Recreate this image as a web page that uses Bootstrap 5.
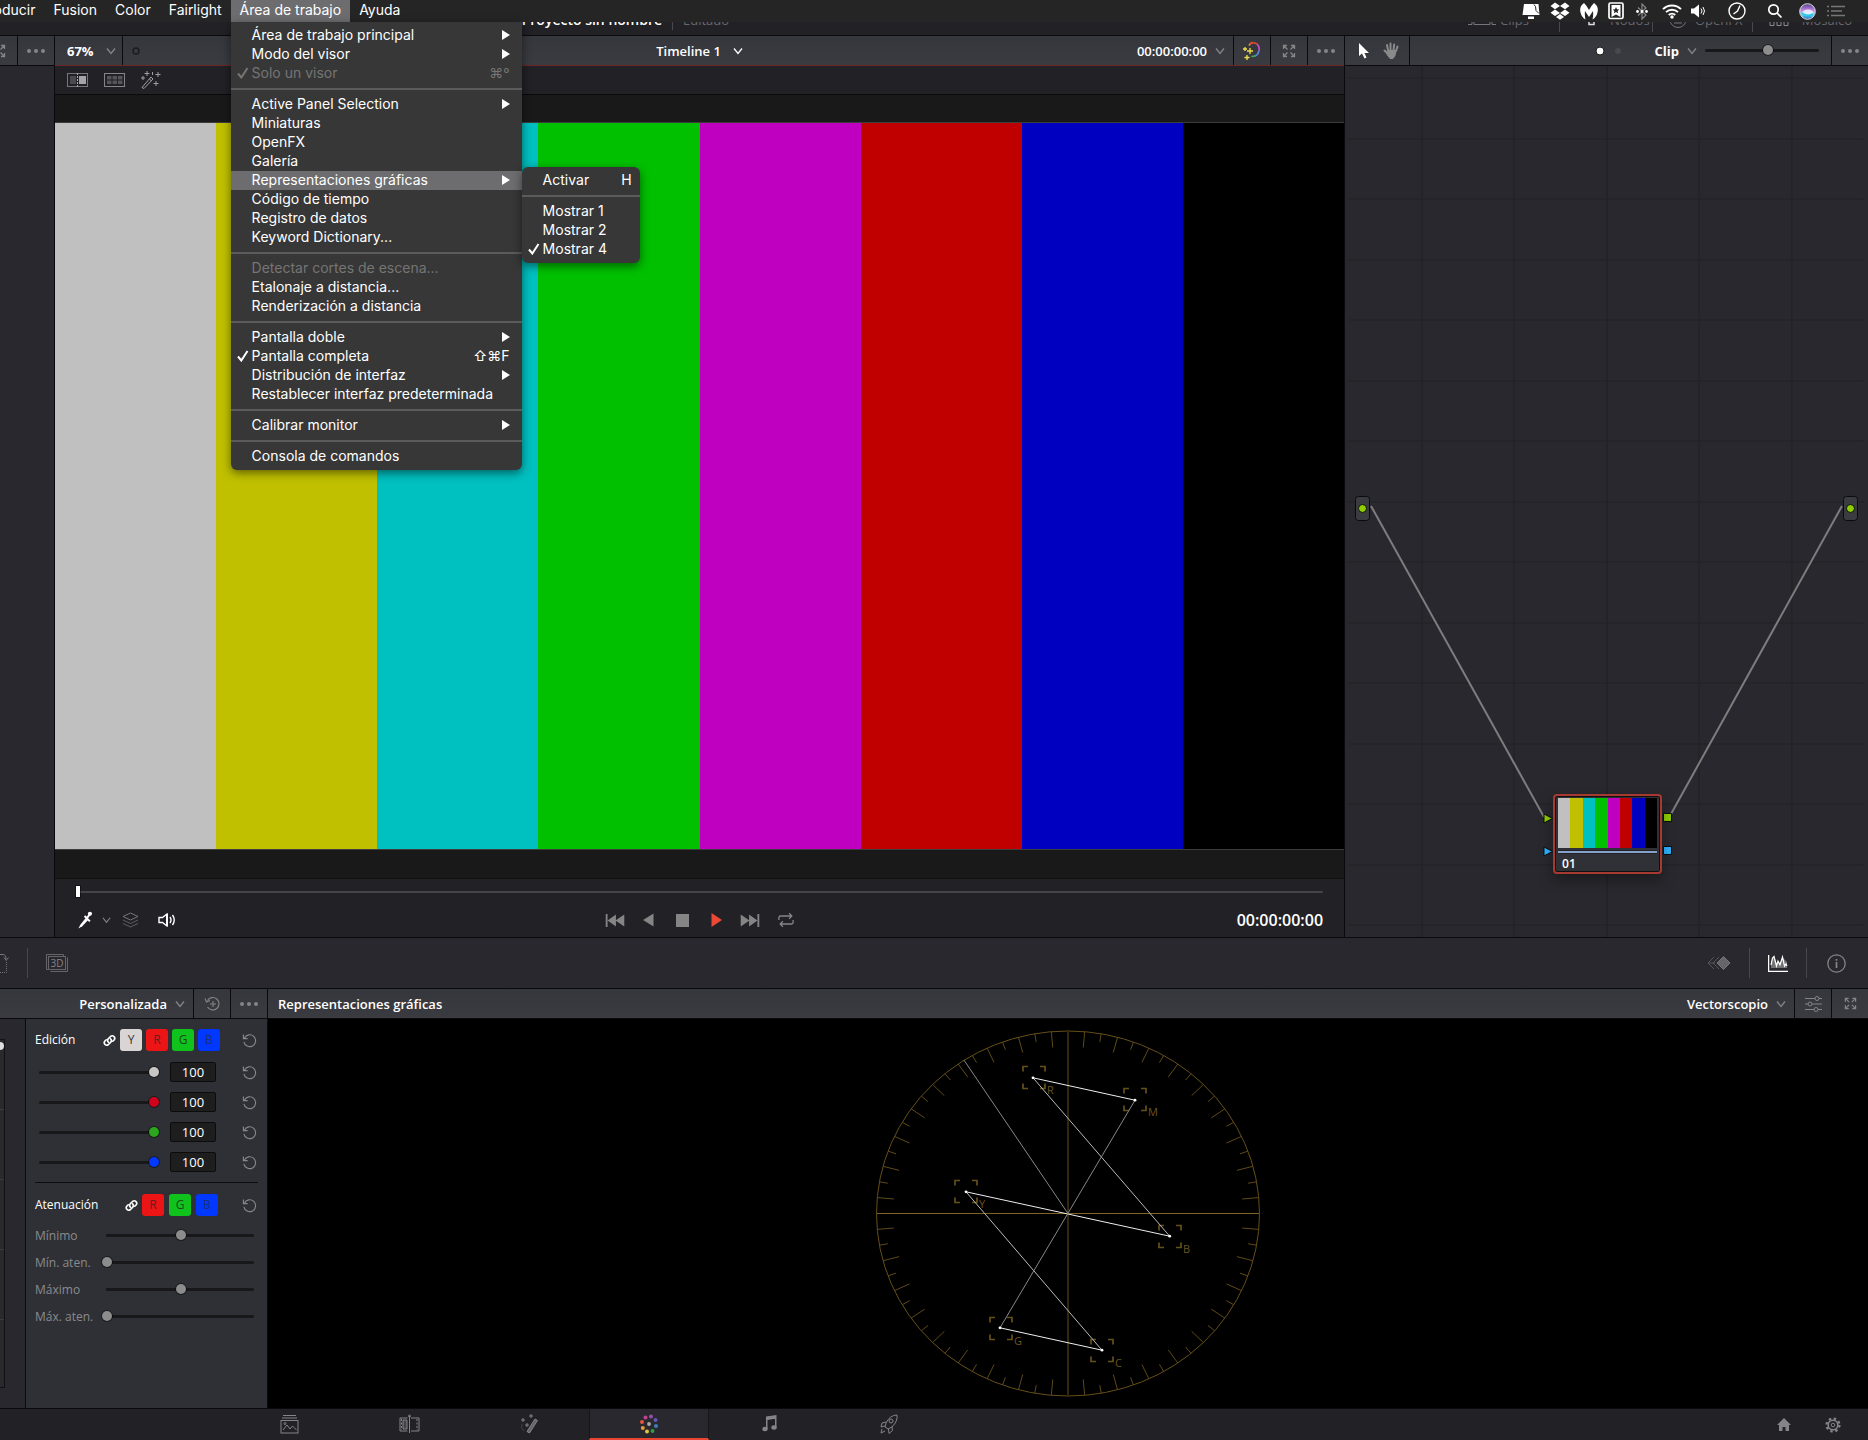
<!DOCTYPE html>
<html lang="es">
<head>
<meta charset="utf-8">
<meta name="viewport" content="width=device-width, initial-scale=1">
<title>Proyecto sin nombre</title>
<link href="https://cdn.jsdelivr.net/npm/bootstrap@5.3.0/dist/css/bootstrap.min.css" rel="stylesheet">
<style>
:root{--edge:#0a0a0c;--head:#393a40;--panel:#29282e;--bar:#212126;--dim:#858588}
body{font-family:"Open Sans","Noto Sans",sans-serif;font-size:13px;line-height:18px;color:#fff;background:var(--bar);overflow-x:hidden}
svg{display:block;flex:none}
button{background:none;border:0;padding:0;color:inherit;font-weight:inherit}
.dim-icon{color:var(--dim)}
.mac{font-family:Inter,"Liberation Sans",sans-serif;font-size:14px;line-height:19px}
.mac-bar{height:22px;background:#252525}
.mac-items{margin-left:-46px}
.mac-top{padding:0 9px;line-height:20px;height:22px;padding-bottom:2px}
.mac-open{background:#6d6d6f}
.status-icons{display:grid;grid-template-columns:32px 26px 32px 22px 30px 30px 22px 56px 20px 44px 14px;justify-items:center;margin-right:25px;height:22px}
.mac-menu{position:absolute;z-index:20;background:#373737;padding:4px 0;border-radius:0 0 6px 6px;box-shadow:0 3px 10px rgba(0,0,0,.5);top:22px;left:0;width:291px}
.mac-sub{top:-4px;left:291px;width:118px;border-radius:6px}
.mac-row{display:flex;align-items:center;width:100%;height:19px;padding:0 12px 2px 21px;position:relative;text-align:left;white-space:nowrap}
.mac-sub .mac-row{padding-right:8px}
.mac-row.hot{background:#6d6d6f}
.mac-row.off{color:#757575}
.tick{position:absolute;left:6px;top:3px}
.mac-sep{height:2px;background:#5b5b5b;margin:5px 0}
.app-strip{height:13px;overflow:hidden}
.app-strip>div{margin-top:-18px}
.app-title{font-size:14px;font-weight:600;margin-left:513px;width:149px;text-align:right;white-space:nowrap}
.strip-sep{width:1px;height:20px;background:#4a4a4e;margin:0 10px}
.app-strip .dimtext{color:#68686c}
.strip-item{display:flex;align-items:center;height:24px;border-right:1px solid #4a4a4e}
.strip-item:last-child{border:0}
.head-row{background:linear-gradient(#36373c,#3a3b41);border-top:1px solid var(--edge);border-bottom:1px solid var(--edge);font-weight:600;height:31px}
.head-row.live{border-bottom-color:#6f2526}
.side{flex:1 1 0}
.cell{display:flex;align-items:center;justify-content:center;align-self:stretch;border-left:1px solid var(--edge);color:var(--dim);width:37px;flex:none}
.cell.slim{width:27px;margin-left:6px}
.gap-a{gap:12px}
.upper{flex:1 1 auto;min-height:700px}
.side-strip{width:55px;border-right:1px solid var(--edge);background:var(--panel)}
.side-fill{border-bottom:1px solid var(--edge)}
.viewer-tools{height:29px;border-bottom:1px solid var(--edge);gap:16px;padding-left:12px;color:#858588}
.stage{background:#191919;padding:27px 0 28px;border-bottom:1px solid #111}
.colour-bars{display:flex;border-top:1px solid #3c3c3c;border-bottom:1px solid #3c3c3c}
.colour-bars i{flex:1}
.colour-bars i:nth-child(1){background:#c0c0c0}.colour-bars i:nth-child(2){background:#c0c000}
.colour-bars i:nth-child(3){background:#00c0c0}.colour-bars i:nth-child(4){background:#00c000}
.colour-bars i:nth-child(5){background:#c000c0}.colour-bars i:nth-child(6){background:#c00000}
.colour-bars i:nth-child(7){background:#0000c0}.colour-bars i:nth-child(8){background:#000}
.transport{height:59px;border-bottom:1px solid var(--edge);padding:6px 21px 0 21px}
.transport .row-b{display:grid;grid-template-columns:1fr auto 1fr;align-items:center;height:42px}
.transport .play-keys{color:#858585;gap:18px}
.big-time{font-size:16px;font-weight:600}
.seek{height:14px;margin:0}
input[type=range]{appearance:none;-webkit-appearance:none;background:transparent;display:block;margin:0;height:14px}
input[type=range]::-webkit-slider-runnable-track{height:3px;background:#18181a;border-radius:2px}
input[type=range]::-webkit-slider-thumb{-webkit-appearance:none;width:10px;height:10px;border-radius:50%;background:var(--thumb,#8c8c8c);margin-top:-4px;box-shadow:0 0 0 1px rgba(0,0,0,.45)}
.seek::-webkit-slider-runnable-track{background:#44454b!important;height:2px!important}
.seek::-webkit-slider-thumb{width:4px!important;height:11px!important;border-radius:0!important;background:#fff!important;margin-top:-5px!important}
.node-panel{width:28.05%;flex:none;border-left:1px solid var(--edge)}
.pointer-tools{width:65px;border-right:1px solid var(--edge);padding-left:14px;gap:14px}
.zoom-range{width:114px}
.node-canvas{position:relative;background:var(--panel);border-bottom:1px solid var(--edge)}
.node-card{position:absolute;left:208px;top:728px;width:109px;height:80px;background:#303136;border:2px solid #a63a31;border-radius:4px;padding:2px 3px;box-shadow:inset 0 0 0 1px #111,0 6px 14px rgba(0,0,0,.35);font-size:12px;font-weight:600;line-height:17px}
.node-card .colour-bars{height:50px;border:0}
.node-card hr{margin:2px 0 1px;border:0;height:4px;background:#86a2cc;opacity:1;border-bottom:1px solid #222;border-top:1px solid #222}
.node-lines{position:absolute;left:0;top:0;width:100%;height:100%}
.mid-bar{height:50px;background:var(--panel);color:#77777b}
.mid-sep{width:1px;height:30px;background:#48484c;margin:0 18px}
.lower{height:389px}
.curve-head{width:267px}
.scope-head{border-left:1px solid var(--edge);padding-left:10px}
.curve-edge{width:26px;border-right:1px solid var(--edge);background:var(--panel);padding-top:20px}
.curve-box{width:5px;height:349px;border:1px solid #121214;border-left:0;position:relative;background:repeating-linear-gradient(#29292d 0 69px,#3a3a3f 69px 70px)}
.curve-box b{position:absolute;left:-4px;top:2px;width:8px;height:8px;border-radius:50%;background:#ddd}
.curve-tools{width:242px;border-right:1px solid var(--edge);background:#2f3035;padding:10px 9px 0}
.line-a{display:flex;align-items:center;height:22px;font-size:12px;font-weight:500}
.group-a{padding-top:6px}
.chip{width:22px;height:22px;border-radius:3px;font-size:12px;line-height:22px;text-align:center;color:#333;flex:none}
.chip.y{background:#d9d5d5}.chip.r{background:#ec1414;color:#63201f}.chip.g{background:#10c21c;color:#174d1b}.chip.b{background:#0038ff;color:#1f2d7c}
.chips{gap:4px;margin-right:22px}
.chips.three{gap:5px;margin-right:24px}
.chan{height:30px;display:flex;align-items:center}
.chan input[type=range]{width:120px;margin-left:4px}
.num{width:46px;height:20px;margin-left:11px;background:#1e1e1f;border:1px solid #0c0c0d;border-radius:2px;color:#fff;font-size:13px;text-align:center;padding:0}
.soft{height:27px;display:flex;align-items:center;color:#8a8a8d;font-size:12px}
.soft label{width:67px}
.soft input{width:152px}
.soft input::-webkit-slider-runnable-track{background:linear-gradient(90deg,transparent 4px,#18181a 4px)}
.rule{height:1px;background:#0d0d0f;margin:5px 0 11px}
.reset{margin-left:auto;margin-right:1px;color:#88888b}
.line-a .reset{margin-left:0}
.scope{background:#000}
.page-bar{height:32px;border-top:1px solid var(--edge);padding-left:229px;color:#77777b}
.page-tab{width:120px;display:flex;align-items:center;justify-content:center;color:inherit;border-bottom:2px solid transparent}
.page-tab.on{background:var(--panel);border-bottom-color:#ec4433;border-left:1px solid #17171a;border-right:1px solid #17171a}
.page-end{gap:34px;margin-right:27px}
</style>
<script src="https://cdn.jsdelivr.net/npm/bootstrap@5.3.0/dist/js/bootstrap.bundle.min.js"></script>
</head>
<body class="d-flex flex-column min-vh-100">
<svg width="0" height="0" class="position-absolute" aria-hidden="true"><defs>
<symbol id="chev" viewBox="0 0 10 10"><path d="M1 2.500L5 7.500L9 2.500" fill="none" stroke="currentColor" stroke-width="1.300"/></symbol>
<symbol id="dots" viewBox="0 0 20 6"><g fill="currentColor"><circle cx="3" cy="3" r="2"/><circle cx="10" cy="3" r="2"/><circle cx="17" cy="3" r="2"/></g></symbol>
<symbol id="expand" viewBox="0 0 14 14"><path d="M1.500 5V1.500H5M9 1.500h3.500V5M12.500 9v3.500H9M5 12.500H1.500V9M1.500 1.500l4 4M12.500 1.500l-4 4M12.500 12.500l-4-4M1.500 12.500l4-4" fill="none" stroke="currentColor" stroke-width="1.300"/></symbol>
<symbol id="reset" viewBox="0 0 16 16"><path d="M2.500 5.500A6.300 6.300 0 1 1 2 9.500M1.500 1.500V6H6" fill="none" stroke="currentColor" stroke-width="1.200"/></symbol>
<symbol id="chain" viewBox="0 0 12 12"><g fill="none" stroke="#fff" stroke-width="1.500" stroke-linecap="round"><path d="M5 7.500a2.300 2.300 0 0 1 0-3.200l2.200-2.200a2.300 2.300 0 0 1 3.200 3.200L9 6.700"/><path d="M7 4.500a2.300 2.300 0 0 1 0 3.200L4.800 9.900A2.300 2.300 0 0 1 1.600 6.700L3 5.300"/></g></symbol>
<symbol id="arrow" viewBox="0 0 8 10"><path d="M0 0L8 5L0 10z" fill="#fff"/></symbol>
<symbol id="check" viewBox="0 0 12 12"><path d="M1 6.500L4.300 10.500L10.500 1" fill="none" stroke="currentColor" stroke-width="2"/></symbol>
<symbol id="skip" viewBox="0 0 20 14"><path d="M0 0h2v14H0zM2 7L11 .5v13zM10.500 7L20 .5v13z" fill="currentColor"/></symbol>
</defs></svg>

<nav class="mac mac-bar d-flex justify-content-between position-relative" aria-label="Menú">
  <div class="mac-items d-flex">
    <button class="mac-top">Reproducir</button><button class="mac-top">Fusion</button><button class="mac-top">Color</button><button class="mac-top">Fairlight</button>
    <div class="position-relative">
      <button class="mac-top mac-open">Área de trabajo</button>
      <div class="mac-menu">
        <button class="mac-row">Área de trabajo principal<svg class="ms-auto" width="8" height="10"><use href="#arrow"/></svg></button>
        <button class="mac-row">Modo del visor<svg class="ms-auto" width="8" height="10"><use href="#arrow"/></svg></button>
        <button class="mac-row off"><svg class="tick" width="12" height="12"><use href="#check"/></svg>Solo un visor<span class="ms-auto">⌘º</span></button>
        <div class="mac-sep"></div>
        <button class="mac-row">Active Panel Selection<svg class="ms-auto" width="8" height="10"><use href="#arrow"/></svg></button>
        <button class="mac-row">Miniaturas</button>
        <button class="mac-row">OpenFX</button>
        <button class="mac-row">Galería</button>
        <div class="position-relative">
          <button class="mac-row hot">Representaciones gráficas<svg class="ms-auto" width="8" height="10"><use href="#arrow"/></svg></button>
          <div class="mac-menu mac-sub">
            <button class="mac-row">Activar<span class="ms-auto">H</span></button>
            <div class="mac-sep"></div>
            <button class="mac-row">Mostrar 1</button>
            <button class="mac-row">Mostrar 2</button>
            <button class="mac-row"><svg class="tick" width="12" height="12"><use href="#check"/></svg>Mostrar 4</button>
          </div>
        </div>
        <button class="mac-row">Código de tiempo</button>
        <button class="mac-row">Registro de datos</button>
        <button class="mac-row">Keyword Dictionary...</button>
        <div class="mac-sep"></div>
        <button class="mac-row off">Detectar cortes de escena...</button>
        <button class="mac-row">Etalonaje a distancia...</button>
        <button class="mac-row">Renderización a distancia</button>
        <div class="mac-sep"></div>
        <button class="mac-row">Pantalla doble<svg class="ms-auto" width="8" height="10"><use href="#arrow"/></svg></button>
        <button class="mac-row"><svg class="tick" width="12" height="12"><use href="#check"/></svg>Pantalla completa<span class="ms-auto">⇧⌘F</span></button>
        <button class="mac-row">Distribución de interfaz<svg class="ms-auto" width="8" height="10"><use href="#arrow"/></svg></button>
        <button class="mac-row">Restablecer interfaz predeterminada</button>
        <div class="mac-sep"></div>
        <button class="mac-row">Calibrar monitor<svg class="ms-auto" width="8" height="10"><use href="#arrow"/></svg></button>
        <div class="mac-sep"></div>
        <button class="mac-row">Consola de comandos</button>
      </div>
    </div>
    <button class="mac-top">Ayuda</button>
  </div>
  <div class="status-icons align-items-center">
    <svg width="18" height="16" viewBox="0 0 18 16"><path d="M2 1h14.500l1 11H.5zM6 13.500h6V16H6z" fill="#fff"/><path d="M12 1.500l1.500 2 .5 4 3 3" fill="none" stroke="#252525"/></svg>
    <svg width="20" height="18" viewBox="0 0 20 18" fill="#fff"><path d="M5 .5L10 4 5 7.200.5 4zM15 .5L19.500 4 15 7.200 10 4zM5 7.500L10 11l-5 3L.5 10.800zM15 7.500l4.500 3.300L15 14l-5-3zM10 12l4 3-4 2.800L6 15z"/></svg>
    <svg width="18" height="17" viewBox="0 0 18 17"><path d="M4 0q3 3 5 7 2-4 5-7 5 3.500 3.500 9.500-1 4.500-5 7 1-4 .5-8.500L9 14 5 8q-.5 4.500.5 8.500-4-2.500-5-7Q-1 3.500 4 0" fill="#fff"/></svg>
    <svg width="16" height="18" viewBox="0 0 16 18"><rect x="1" y="1" width="14" height="15.500" rx="1.500" fill="none" stroke="#fff" stroke-width="1.700"/><path d="M3.500 3h9v12L8 12.500 3.500 15z" fill="#fff"/><path d="M8 5l1 2.200 2.300.2-1.700 1.500.5 2.300L8 10l-2.100 1.200.5-2.300-1.700-1.500L7 7.200z" fill="#252525"/></svg>
    <svg width="12" height="17" viewBox="0 0 12 17"><path d="M2 4.500l8 7.500-4 4V1l4 4-8 7.500" fill="none" stroke="#888" stroke-width="1.200"/><g fill="#fff"><circle cx="1.500" cy="8.500" r="1.400"/><circle cx="6" cy="8.500" r="1.400"/><circle cx="10.500" cy="8.500" r="1.400"/></g></svg>
    <svg width="20" height="15" viewBox="0 0 20 15"><g fill="none" stroke="#fff" stroke-width="1.900"><path d="M1 5.200a12.700 12.700 0 0 1 18 0M4 8.200a8.500 8.500 0 0 1 12 0M6.800 11a4.500 4.500 0 0 1 6.400 0"/></g><circle cx="10" cy="13" r="1.700" fill="#fff"/></svg>
    <svg width="14" height="14" viewBox="0 0 14 14"><path d="M0 4.500h3L8 .5v13l-5-4H0z" fill="#fff"/><path d="M10 4.500q2 2.500 0 5M12 3q3 4 0 8" fill="none" stroke="#fff"/></svg>
    <svg width="18" height="18" viewBox="0 0 18 18" fill="none" stroke="#fff" stroke-width="1.400"><circle cx="9" cy="9" r="8"/><path d="M12 3.500L9.500 9 5.500 12"/></svg>
    <svg width="16" height="16" viewBox="0 0 16 16" fill="none" stroke="#fff" stroke-width="1.700"><circle cx="6.500" cy="6.500" r="4.700"/><path d="M10 10l4.500 4.500"/></svg>
    <svg width="17" height="17" viewBox="0 0 17 17"><defs><linearGradient id="siri" x2="0" y2="1"><stop stop-color="#4b3f86"/><stop offset=".45" stop-color="#c98be8"/><stop offset=".7" stop-color="#56e0ee"/><stop offset="1" stop-color="#2a5fc0"/></linearGradient></defs><circle cx="8.500" cy="8.500" r="7.800" fill="url(#siri)" stroke="#ddd"/><ellipse cx="9" cy="9.500" rx="5.500" ry="3" fill="#fff" opacity=".75"/><path d="M3 10q5 4 11 1" stroke="#21c5e8" fill="none" stroke-width="1.500"/></svg>
    <svg width="18" height="12" viewBox="0 0 18 12" fill="none" stroke="#777" stroke-width="1.600"><path d="M0 1.500h2M4 1.500h14M0 6h2M4 6h11M0 10.500h2M4 10.500h14"/></svg>
  </div>
</nav>

<div class="app-strip d-flex justify-content-between">
  <div class="d-flex align-items-center"><span class="app-title">Proyecto sin nombre</span><span class="strip-sep"></span><span class="dimtext">Editado</span></div>
  <div class="d-flex align-items-center">
    <div class="strip-item" style="width:92px"><svg width="28" height="14" viewBox="0 0 28 14" fill="none" stroke="#77777b"><path d="M0 11.500h4V2M6 0v11.500h16V0M24 2v9.500h4"/></svg><span class="dimtext ms-1">Clips</span></div>
    <div class="strip-item ps-4" style="width:93px"><svg width="14" height="14" viewBox="0 0 14 14" fill="none" stroke="#ddd" stroke-width="1.500"><path d="M1 1v6h4v4.500h5V7h3"/></svg><span class="dimtext ms-2 ps-1">Nodos</span></div>
    <div class="strip-item ps-3" style="width:100px"><svg width="18" height="18" viewBox="0 0 18 18" fill="none" stroke="#77777b"><circle cx="9" cy="8.500" r="8"/><path d="M5 12h8"/></svg><span class="dimtext ms-2">OpenFX</span></div>
    <div class="strip-item ps-3" style="width:115px"><svg width="20" height="14" viewBox="0 0 20 14" fill="none" stroke="#8b8b8f"><path d="M1 8.500h4v4H1zM8 8.500h4v4H8zM15 8.500h4v4h-4z"/></svg><span class="dimtext ms-auto me-3">Mosaico</span></div>
  </div>
</div>

<main class="upper d-flex">
  <aside class="side-strip d-flex flex-column">
    <div class="head-row d-flex justify-content-end overflow-hidden"><button class="cell border-0" aria-label="Ampliar"><svg width="14" height="14"><use href="#expand"/></svg></button><button class="cell" aria-label="Opciones"><svg width="20" height="6"><use href="#dots"/></svg></button></div>
    <div class="flex-grow-1 side-fill"></div>
  </aside>
  <section class="d-flex flex-column flex-grow-1">
    <div class="head-row live d-flex align-items-center">
      <div class="side d-flex align-items-center align-self-stretch">
        <button class="d-flex align-items-center gap-a ps-2 ms-1 fw-bold">67%<svg class="dim-icon" width="10" height="10"><use href="#chev"/></svg></button>
        <span class="cell slim"><svg width="8" height="8"><circle cx="4" cy="4" r="3" fill="none" stroke="#1c1c1f" stroke-width="1.500"/></svg></span>
      </div>
      <button class="d-flex align-items-center gap-a">Timeline 1<svg width="10" height="10"><use href="#chev"/></svg></button>
      <div class="side d-flex align-items-center align-self-stretch justify-content-end">
        <button class="d-flex align-items-center gap-1 me-2">00:00:00:00<svg class="dim-icon ms-1" width="10" height="10"><use href="#chev"/></svg></button>
        <button class="cell" aria-label="Omitir etalonaje"><svg width="20" height="20" viewBox="0 0 20 20" fill="none" stroke-width="1.700"><path d="M7 4.500q1-2.500 4-3" stroke="#e8a03a"/><path d="M8 3q3-2.500 7 0" stroke="#e4452e"/><path d="M15 3q3 3 2 7" stroke="#c44fc4"/><path d="M17 10q-1 4-4 5" stroke="#5b7fd6"/><path d="M13.500 14.500q-2.500 1.500-4 .8" stroke="#3fae62"/><path d="M8 7v6M5 10h6M5 14v5M2.500 16.500h5M3 6v4M1 8h4" stroke="#f0e04a" stroke-width="1.300"/></svg></button>
        <button class="cell" aria-label="Ampliar visor"><svg width="14" height="14"><use href="#expand"/></svg></button>
        <button class="cell" aria-label="Opciones del visor"><svg width="20" height="6"><use href="#dots"/></svg></button>
      </div>
    </div>
    <div class="viewer-tools d-flex align-items-center">
      <svg width="21" height="14" viewBox="0 0 21 14"><rect x=".5" y=".5" width="20" height="13" fill="none" stroke="#77777b"/><path d="M3 3h6v8H3z" fill="#4b4b4f"/><path d="M12 3h7v8h-7z" fill="#a5a5a8"/><path d="M10.500 0v14" stroke="#aaa" stroke-dasharray="2 1"/></svg>
      <svg width="21" height="14" viewBox="0 0 21 14"><rect x=".5" y=".5" width="20" height="13" fill="none" stroke="#858588"/><path d="M3 3h4.500v3.500H3zM8.500 3H13v3.500H8.500zM14 3h4.500v3.500H14zM3 7.500h4.500V11H3zM8.500 7.500H13V11H8.500zM14 7.500h4.500V11H14z" fill="#55555a"/></svg>
      <svg width="20" height="18" viewBox="0 0 20 18" fill="none" stroke="#a0a0a3"><path d="M1 16.500L10 6l2 2L3 17.500zM8.500 8l2 2"/><path d="M6 0v5M3.500 2.500h5M17 1v5M14.500 3.500h5M2 5v4M0 7h4M15 10v5M12.500 12.500h5M11.500 1v3"/></svg>
    </div>
    <div class="stage d-flex flex-grow-1"><div class="colour-bars w-100"><i></i><i></i><i></i><i></i><i></i><i></i><i></i><i></i></div></div>
    <div class="transport">
      <input class="seek w-100" type="range" value="0" aria-label="Posición">
      <div class="row-b">
        <div class="d-flex align-items-center">
          <svg width="18" height="18" viewBox="0 0 16 20"><path d="M.5 19.500L3 15 9 7.500l2.500 2.500L5 17z" fill="#fff"/><path d="M7.500 5.500l6 6M10 8l4-5" stroke="#fff" stroke-width="2.200"/><circle cx="13.500" cy="3" r="2.300" fill="#fff"/></svg>
          <svg class="dim-icon ms-2" width="9" height="10"><use href="#chev"/></svg>
          <svg class="gap-icon ms-2 me-3" width="23" height="16" viewBox="-3 0 23 16" fill="none" stroke="#77777b"><path d="M8.500 1L16 4.500 8.500 8 1 4.500z"/><path d="M1 8l7.500 3.500L16 8M1 11.500L8.500 15l7.500-3.500" opacity=".7"/></svg>
          <svg width="18" height="14" viewBox="0 0 18 14" fill="none" stroke="#fff" stroke-width="1.400"><path d="M1 4.500h3.500L9 1v12L4.500 9.500H1z"/><path d="M9 1v12" stroke-width="2"/><path d="M12 4q2 3 0 6M14.500 2q3.500 5 0 10"/></svg>
        </div>
        <div class="play-keys d-flex align-items-center">
          <button aria-label="Inicio"><svg width="20" height="13"><use href="#skip"/></svg></button>
          <button aria-label="Atrás"><svg width="11" height="14" viewBox="0 0 11 14"><path d="M0 7L10.500.5v13z" fill="currentColor"/></svg></button>
          <button class="ms-1" aria-label="Detener"><svg width="13" height="13"><rect width="13" height="13" fill="currentColor"/></svg></button>
          <button class="ms-1" aria-label="Reproducir"><svg width="11" height="14" viewBox="0 0 11 14"><path d="M.5 0L11 7 .5 14z" fill="#ec4836"/></svg></button>
          <button aria-label="Final"><svg width="20" height="13" viewBox="0 0 20 14"><path d="M18 0h2v14h-2zM18 7L9 .5v13zM9.500 7L0 .5v13z" fill="currentColor"/></svg></button>
          <button aria-label="Repetir"><svg width="16" height="16" viewBox="0 0 18 16" fill="none" stroke="#858585" stroke-width="1.500"><path d="M1 8V5.500Q1 3.500 3 3.500h12M12.500.5l3 3-3 3M17 8v2.500q0 2-2 2H3M5.500 9.500l-3 3 3 3"/></svg></button>
        </div>
        <div class="big-time text-end">00:00:00:00</div>
      </div>
    </div>
  </section>
  <section class="node-panel d-flex flex-column">
    <div class="head-row d-flex align-items-center">
      <div class="pointer-tools d-flex align-items-center h-100">
        <svg width="10" height="16" viewBox="0 0 10 16"><path d="M0 0v13l3-2.500L5.500 15.500l2-1L5.500 10H10z" fill="#fff"/></svg>
        <svg width="16" height="17" viewBox="0 0 16 17" fill="none" stroke="#8a8a8a" stroke-linecap="round"><path d="M5 8L4 3M7.500 7.500V1.500M10.500 8l.7-5.500M13 9l1.500-4.500M4 11L1.500 8.500" stroke-width="2"/><path d="M4.500 8.500h8.500l-1 5-2 3H7l-3-4z" fill="#8a8a8a"/></svg>
      </div>
      <div class="d-flex align-items-center ms-auto me-2">
        <svg width="28" height="10"><circle cx="5" cy="5" r="4" fill="#fff" stroke="#1a1a1a"/><circle cx="23" cy="5" r="3" fill="#48494e"/></svg>
        <button class="d-flex align-items-center gap-2 ms-4 me-2 ps-2 fw-bold">Clip<svg class="dim-icon" width="10" height="10"><use href="#chev"/></svg></button>
        <input class="zoom-range me-1" type="range" min="0" max="100" value="56" aria-label="Zoom">
      </div>
      <button class="cell" aria-label="Opciones de nodos"><svg width="20" height="6"><use href="#dots"/></svg></button>
    </div>
    <div class="node-canvas flex-grow-1">
      <svg class="node-lines" viewBox="0 0 523 871" preserveAspectRatio="xMidYMin meet">
        <g stroke="#232328" stroke-width="1.500"><path d="M77 0V871M169 0V871M262 0V871M354 0V871M447 0V871"/><path d="M4 12H519M4 73H519M4 133H519M4 194H519M4 254H519M4 315H519M4 375H519M4 436H519M4 496H519M4 557H519M4 617H519M4 678H519M4 738H519M4 799H519M4 859H519"/></g>
        <path d="M26 440L199 751M326 748L497 440" stroke="#7d7d7f" stroke-width="2" fill="none"/>
        <g stroke="#0b0b0c"><g fill="#3b3c41"><rect x="10.500" y="430.500" width="14" height="24" rx="3"/><rect x="498.500" y="430.500" width="14" height="24" rx="3"/></g>
        <g fill="#8fce00"><circle cx="17.500" cy="442.500" r="4"/><circle cx="505.500" cy="442.500" r="4"/><path d="M199 748v9l8.500-4.500zM318.500 747.500h8v8h-8z"/></g><path d="M199 781v9l8.500-4.500zM318.500 780.500h8v8h-8z" fill="#2fb4ff"/></g>
      </svg>
      <div class="node-card"><div class="colour-bars"><i></i><i></i><i></i><i></i><i></i><i></i><i></i><i></i></div><hr><span class="px-1">01</span></div>
    </div>
  </section>
</main>

<div class="mid-bar d-flex align-items-center justify-content-between">
  <div class="d-flex align-items-center">
    <svg width="9" height="20" viewBox="0 0 9 20" fill="none" stroke="#77777b"><path d="M0 1.500h3Q6 1.500 6 6M4 4.500l2.200 3 2.300-3"/><path d="M6.500 9v10.500H0" stroke-dasharray="1 1"/></svg>
    <span class="mid-sep"></span>
    <svg width="22" height="18" viewBox="0 0 22 18" fill="none" stroke="#66666a"><path d="M2.500 15.500h-2V.500h17v2M21.500 3.500v14h-17"/><rect x="2.500" y="2.500" width="17" height="13"/><text x="4.500" y="13" font-family="Open Sans" font-size="10" fill="#85858a" stroke="none">3D</text></svg>
  </div>
  <div class="d-flex align-items-center">
    <svg width="24" height="14" viewBox="0 0 24 14" fill="none" stroke="#55555a"><path d="M7 1L1 7l6 6M12 1L6 7l6 6M1 7h7"/><path d="M16.500.5L23 7l-6.500 6.500L10 7z" fill="#66666a" stroke="#77777b"/></svg>
    <span class="mid-sep"></span>
    <svg width="20" height="17" viewBox="0 0 20 17"><path d="M3 13V7l3-5 3 7 3-2 3-4 4 4v6z" fill="#737377"/><path d="M.5 0v16.500H20" fill="none" stroke="#fff" stroke-width="1.500"/><path d="M3 10l1.500-7L6 1.500 8.500 11 10 6l2 4 2.500-8 2 9 1.500-2 1 2" fill="none" stroke="#fff" stroke-width="1.200"/></svg>
    <span class="mid-sep"></span>
    <svg class="me-3" width="23" height="19" viewBox="-1 0 23 19" fill="none" stroke="#858588" stroke-width="1.300"><circle cx="10.500" cy="9.500" r="8.700"/><path d="M10.500 8v6M10.500 5v1.700" stroke-width="1.700"/></svg><span class="ps-1"></span>
  </div>
</div>

<section class="head-row d-flex align-items-center">
  <div class="curve-head d-flex align-items-center h-100 justify-content-end">
    <button class="d-flex align-items-center gap-2 me-2">Personalizada<svg class="dim-icon" width="10" height="10"><use href="#chev"/></svg></button>
    <button class="cell" aria-label="Restablecer"><svg width="17" height="16" viewBox="0 0 17 16" fill="none" stroke="#858588" stroke-width="1.100"><path d="M3.500 4.500A6.200 6.200 0 1 1 3.500 11M1 2.500l1.500 3.500L6 4.500M9 5v6M6 8h6"/></svg></button>
    <button class="cell" aria-label="Opciones de curva"><svg width="20" height="6"><use href="#dots"/></svg></button>
  </div>
  <div class="scope-head h-100 d-flex align-items-center flex-grow-1">Representaciones gráficas</div>
  <button class="d-flex align-items-center gap-2 me-2">Vectorscopio<svg class="dim-icon" width="10" height="10"><use href="#chev"/></svg></button>
  <button class="cell" aria-label="Ajustes"><svg width="17" height="16" viewBox="0 0 17 16" fill="none" stroke="#858588"><path d="M0 2.500h10M14 2.500h3M0 8h3M7 8h10M0 13.500h9M13 13.500h4"/><circle cx="12" cy="2.500" r="2"/><circle cx="5" cy="8" r="2"/><circle cx="11" cy="13.500" r="2"/></svg></button>
  <button class="cell" aria-label="Ampliar gráfico"><svg width="13" height="13"><use href="#expand"/></svg></button>
</section>

<section class="lower d-flex">
  <div class="curve-edge"><div class="curve-box"><b></b></div></div>
  <div class="curve-tools">
    <div class="line-a"><span>Edición</span><svg class="ms-auto me-1" width="13" height="13"><use href="#chain"/></svg>
      <div class="chips d-flex"><button class="chip y">Y</button><button class="chip r">R</button><button class="chip g">G</button><button class="chip b">B</button></div>
      <button class="reset" aria-label="Restablecer edición"><svg width="15" height="15"><use href="#reset"/></svg></button></div>
    <div class="group-a">
      <div class="chan"><input type="range" value="100" style="--thumb:#c9c5c5" aria-label="Intensidad Y"><input class="num" value="100" aria-label="Y"><button class="reset" aria-label="Restablecer Y"><svg width="15" height="15"><use href="#reset"/></svg></button></div>
      <div class="chan"><input type="range" value="100" style="--thumb:#d0021b" aria-label="Intensidad R"><input class="num" value="100" aria-label="R"><button class="reset" aria-label="Restablecer R"><svg width="15" height="15"><use href="#reset"/></svg></button></div>
      <div class="chan"><input type="range" value="100" style="--thumb:#2ba61d" aria-label="Intensidad G"><input class="num" value="100" aria-label="G"><button class="reset" aria-label="Restablecer G"><svg width="15" height="15"><use href="#reset"/></svg></button></div>
      <div class="chan"><input type="range" value="100" style="--thumb:#0038ff" aria-label="Intensidad B"><input class="num" value="100" aria-label="B"><button class="reset" aria-label="Restablecer B"><svg width="15" height="15"><use href="#reset"/></svg></button></div>
    </div>
    <div class="rule"></div>
    <div class="line-a"><span>Atenuación</span><svg class="ms-auto me-1" width="13" height="13"><use href="#chain"/></svg>
      <div class="chips three d-flex"><button class="chip r">R</button><button class="chip g">G</button><button class="chip b">B</button></div>
      <button class="reset" aria-label="Restablecer atenuación"><svg width="15" height="15"><use href="#reset"/></svg></button></div>
    <div class="group-a">
      <div class="soft"><label for="s1">Mínimo</label><input id="s1" type="range" value="52"></div>
      <div class="soft"><label for="s2">Mín. aten.</label><input id="s2" type="range" value="0"></div>
      <div class="soft"><label for="s3">Máximo</label><input id="s3" type="range" value="52"></div>
      <div class="soft"><label for="s4">Máx. aten.</label><input id="s4" type="range" value="0"></div>
    </div>
  </div>
  <div class="scope flex-grow-1 d-flex align-items-center justify-content-center">
    <svg id="vector" width="400" height="389" viewBox="-200 -194.500 400 389" fill="none" font-family="Open Sans" font-size="11">
      <ellipse rx="191.500" ry="182.500" stroke="#66501a"/>
      <path d="M-191 0H191" stroke="#7d6420"/><path d="M0-182V182" stroke="#33270c" stroke-width="2"/>
      <path id="ticks" stroke="#5f4a18"/>
      <g id="targets" stroke="#66501a" stroke-width="1.700"></g>
      <path d="M-35-135.700L67-113.300M-102-21.700L101.700 22.700M-68 114.300L34 136.700" stroke="#eee"/>
      <path d="M-35-135.700L101.700 22.700M-102-21.700L34 136.700" stroke="#bbb"/>
      <path d="M67-113.300L-68 114.300M0 0L-104-153.300" stroke="#888"/>
      <g fill="#fff"><circle cx="-35" cy="-135.700" r="1.400"/><circle cx="67" cy="-113.300" r="1.400"/><circle cx="101.700" cy="22.700" r="1.400"/><circle cx="-102" cy="-21.700" r="1.400"/><circle cx="-68" cy="114.300" r="1.400"/><circle cx="34" cy="136.700" r="1.400"/></g>
    </svg>
  </div>
</section>

<footer class="page-bar d-flex">
  <a class="page-tab" href="#" aria-label="Medios"><svg width="19" height="20" viewBox="0 0 19 20" fill="none" stroke="#858588"><path d="M3 1.500h13M2 4h15"/><rect x="1" y="6.500" width="17" height="12.500"/><path d="M3 16l4-5 3 4 2.500-3 4 4"/><circle cx="5" cy="9.500" r="1"/></svg></a>
  <a class="page-tab" href="#" aria-label="Edición"><svg width="21" height="20" viewBox="0 0 21 20" fill="none" stroke="#858588"><path d="M8.500 4H1v13h7.500M12 4h8v13h-8M10.500 2v17"/><path d="M4 6h4v9H4z" fill="#444448"/><path d="M2.500 5v11M18 5v11" stroke-dasharray="2 1.500"/><circle cx="10.500" cy="2" r="1"/></svg></a>
  <a class="page-tab" href="#" aria-label="Fusion"><svg width="20" height="20" viewBox="0 0 20 20" fill="none" stroke="#858588"><path d="M8 17.500L16 5l2.500 1.500-8 12.500z" fill="#66666a"/><path d="M12 0v4M10 2h4M4 4v4M2 6h4M8 9v4M6 11h4"/><path d="M3 10q-2 4 2 7" stroke="#444"/></svg></a>
  <a class="page-tab on" href="#" aria-label="Color"><svg width="20" height="20" viewBox="0 0 20 20"><circle cx="10" cy="10" r="1.900" fill="#aaa"/><circle cx="12" cy="2.500" r="2" fill="#9450a5"/><circle cx="16.500" cy="6" r="2" fill="#6159b8"/><circle cx="17" cy="12" r="2" fill="#3d7fb8"/><circle cx="13.500" cy="17" r="2" fill="#2a9d4c"/><circle cx="8" cy="17.500" r="2" fill="#e0c53a"/><circle cx="3.800" cy="14" r="2" fill="#e79a3c"/><circle cx="3" cy="8" r="2" fill="#e2553f"/><circle cx="6.500" cy="3.500" r="2" fill="#c14390"/></svg></a>
  <a class="page-tab" href="#" aria-label="Fairlight"><svg width="15" height="17" viewBox="0 0 15 17" fill="#858588"><path d="M4 1.500L14.500 0v3.500L5.500 5v9H4zM13 2h1.500v10.500H13z"/><ellipse cx="3" cy="14" rx="2.700" ry="2.200"/><ellipse cx="12" cy="12.500" rx="2.700" ry="2.200"/></svg></a>
  <a class="page-tab" href="#" aria-label="Entrega"><svg width="18" height="20" viewBox="0 0 18 20" fill="none" stroke="#858588"><path d="M17 1q-7 0-11 8l-1 4 3 2 4-2q6-6 5-12zM6 8l-4 1-1 4 4-1M12 12.500l.5 4-3.500 3-.5-4.500M2 15l-1 4 4-2"/><circle cx="11" cy="7" r="2"/></svg></a>
  <div class="page-end ms-auto d-flex align-items-center">
    <a href="#" aria-label="Inicio"><svg width="14" height="13" viewBox="0 0 14 13"><path d="M7 0l7 7h-2v6H8.500V9h-3v4H2V7H0z" fill="#858588"/></svg></a>
    <a href="#" aria-label="Ajustes del proyecto"><svg width="16" height="16" viewBox="0 0 16 16" fill="none" stroke="#858588"><circle cx="8" cy="8" r="4.800" stroke-width="1.600"/><circle cx="8" cy="8" r="1.800"/><circle cx="8" cy="8" r="6.500" stroke-width="2.200" stroke-dasharray="2.500 2.600"/></svg></a>
  </div>
</footer>
<script>
// Graticule: long marks every 10 degrees from 5, short ones between them
let d = '';
for (let a = 5; a < 360; a += 5) {
  if (a % 90 === 0) continue;
  const k = a % 10 ? 0.913 : 0.955, x = Math.cos(a * Math.PI / 180) * 191.5, y = Math.sin(a * Math.PI / 180) * 182.5;
  d += `M${x} ${y}L${x * k} ${y * k}`;
}
document.getElementById('ticks').setAttribute('d', d);
// Colour targets
let t = '';
for (const [n, x, y] of [['R', -34, -136], ['M', 67, -114], ['B', 102, 23], ['Y', -102, -22], ['G', -67, 115], ['C', 34, 137]]) {
  for (const [i, j] of [[-1, -1], [1, -1], [1, 1], [-1, 1]]) t += `<path d="M${x + 11 * i} ${y + 6 * j}V${y + 11 * j}H${x + 6 * i}"/>`;
  t += `<text x="${x + 13}" y="${y + 16}" fill="#6b541c" stroke="none">${n}</text>`;
}
document.getElementById('targets').innerHTML = t;
</script>
</body>
</html>
